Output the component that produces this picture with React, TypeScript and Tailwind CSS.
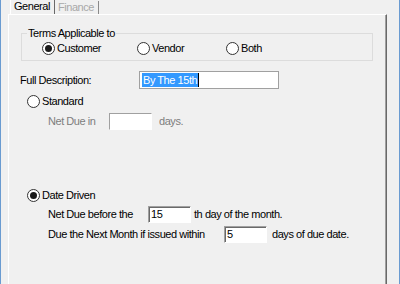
function Radio({ checked }: { checked?: boolean }) {
  return (
    <span className="w-[13px] h-[13px] rounded-full border border-[#333] bg-white flex items-center justify-center shrink-0">
      {checked && <span className="w-[7px] h-[7px] rounded-full bg-[#1a1a1a]" />}
    </span>
  )
}

function Field({ w, h = 17, value, disabled }: { w: number; h?: number; value?: string; disabled?: boolean }) {
  return (
    <div
      className={
        'bg-white border border-t-[#a0a0a0] border-l-[#a0a0a0] border-b-white border-r-white flex items-center pl-[2px] leading-[13px] ' +
        (disabled ? '' : 'shadow-[inset_1px_1px_0_#696969]')
      }
      style={{ width: w, height: h }}
    >
      {value}
    </div>
  )
}

export default function App() {
  return (
    <div className="w-[400px] h-[284px] bg-[#f0f0f0] border-x border-[#6a9bd1] overflow-hidden text-[11px] leading-[13px] tracking-[-0.45px] text-black font-['Liberation_Sans',Arial,sans-serif]">
      {/* tabs */}
      <div className="flex pl-[9px] h-[14px]">
        <div className="w-[45px] h-[14px] border-l border-white border-r border-r-[#696969] pl-[3px] pt-[0px]">General</div>
        <div className="w-[44px] h-[13px] mt-[1px] border-r border-r-[#8a8a8a] pl-[3px] text-[#a8a8a8]">Finance</div>
      </div>

      {/* panel */}
      <div className="ml-[7px] w-[379px] h-[270px] border-t border-l border-white border-r border-r-[#696969] shadow-[inset_-1px_0_0_#a0a0a0]">
        {/* group box */}
        <div className="relative ml-[12px] mt-[18px] w-[352px] h-[28px] border border-[#dcdcdc]">
          <span className="absolute left-[5px] -top-[7px] px-[1px] bg-[#f0f0f0]">Terms Applicable to</span>
          <div className="flex pl-[20px] pt-[8px]">
            <label className="flex items-center gap-[2px] w-[95px]">
              <Radio checked />
              <span>Customer</span>
            </label>
            <label className="flex items-center gap-[2px] w-[89px]">
              <Radio />
              <span>Vendor</span>
            </label>
            <label className="flex items-center gap-[2px]">
              <Radio />
              <span>Both</span>
            </label>
          </div>
        </div>

        {/* full description */}
        <div className="flex items-center ml-[11px] mt-[10px] h-[18px]">
          <span className="w-[119px]">Full Description:</span>
          <div className="w-[140px] h-[18px] bg-white border border-[#a0a0a0] flex items-center pl-[2px]">
            <span className="bg-[#3399ff] text-white px-[1px] leading-[14px]">By The 15th</span>
            <span className="w-[1px] h-[14px] bg-black" />
          </div>
        </div>

        {/* standard */}
        <label className="flex items-center gap-[2px] ml-[18px] mt-[6px] h-[13px]">
          <Radio />
          <span>Standard</span>
        </label>
        <div className="flex items-center ml-[39px] mt-[5px] h-[17px] text-[#7d7d7d]">
          <span className="w-[61px]">Net Due in</span>
          <Field w={43} disabled />
          <span className="ml-[7px]">days.</span>
        </div>

        {/* date driven */}
        <label className="flex items-center gap-[2px] ml-[18px] mt-[59px] h-[13px]">
          <Radio checked />
          <span>Date Driven</span>
        </label>
        <div className="flex items-center ml-[39px] mt-[4px] h-[17px]">
          <span className="w-[100px]">Net Due before the</span>
          <Field w={43} value="15" />
          <span className="ml-[3px]">th day of the month.</span>
        </div>
        <div className="flex items-center ml-[39px] mt-[3px] h-[17px]">
          <span className="w-[176px]">Due the Next Month if issued within</span>
          <Field w={43} value="5" />
          <span className="ml-[5px]">days of due date.</span>
        </div>
      </div>
    </div>
  )
}
